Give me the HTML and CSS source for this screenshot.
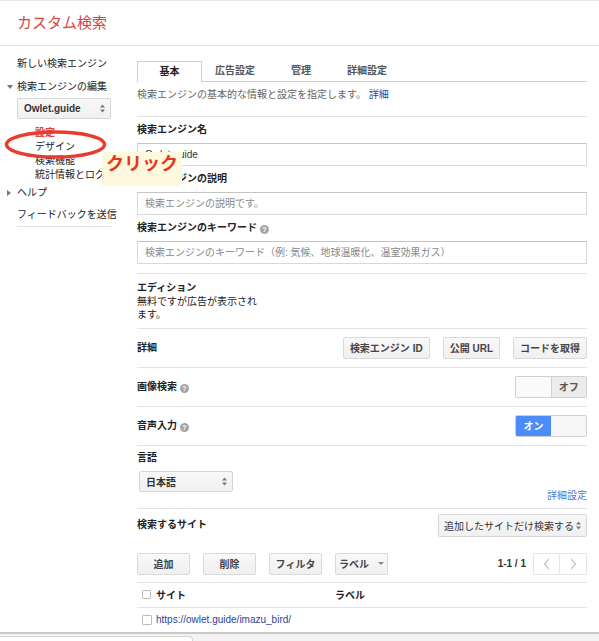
FILE: index.html
```html
<!DOCTYPE html>
<html lang="ja">
<head>
<meta charset="utf-8">
<title>カスタム検索</title>
<link rel="stylesheet" href="styles.css">
</head>
<body>
<div class="page">
  <header class="topbar"><h1 class="title">カスタム検索</h1></header>
  <div class="layout">
    <nav class="side">
      <div class="nav-item first">新しい検索エンジン</div>
      <div class="nav-item"><span class="tri down"></span>検索エンジンの編集</div>
      <div class="select side-select"><span class="sel-text">Owlet.guide</span><svg class="arrows" width="5" height="9" viewBox="0 0 5 9"><path d="M0 3.5L2.5 0.5L5 3.5Z M0 5.5L2.5 8.5L5 5.5Z" fill="#777"/></svg></div>
      <ul class="sub">
        <li class="active">設定</li>
        <li>デザイン</li>
        <li>検索機能</li>
        <li>統計情報とログ</li>
      </ul>
      <div class="nav-item help-item"><span class="tri right"></span>ヘルプ</div>
      <div class="nav-item feedback">フィードバックを送信</div>
    </nav>
    <main class="main">
      <div class="tabs">
        <div class="tab active">基本</div>
        <div class="tab">広告設定</div>
        <div class="tab">管理</div>
        <div class="tab">詳細設定</div>
      </div>
      <p class="intro">検索エンジンの基本的な情報と設定を指定します。 <a class="link">詳細</a></p>
      <section class="sec fields">
        <div class="label">検索エンジン名</div>
        <div class="input">Owlet.guide</div>
        <div class="label">検索エンジンの説明</div>
        <div class="input ph">検索エンジンの説明です。</div>
        <div class="label">検索エンジンのキーワード<span class="help">?</span></div>
        <div class="input ph">検索エンジンのキーワード（例: 気候、地球温暖化、温室効果ガス）</div>
      </section>
      <section class="sec edition">
        <div class="label">エディション</div>
        <div class="edition-text">無料ですが広告が表示されます。</div>
      </section>
      <section class="sec row">
        <div class="label">詳細</div>
        <div class="btns">
          <span class="btn">検索エンジン ID</span>
          <span class="btn">公開 URL</span>
          <span class="btn">コードを取得</span>
        </div>
      </section>
      <section class="sec row">
        <div class="label">画像検索<span class="help">?</span></div>
        <div class="toggle off"><span class="t-l"></span><span class="t-r">オフ</span></div>
      </section>
      <section class="sec row">
        <div class="label">音声入力<span class="help">?</span></div>
        <div class="toggle on"><span class="t-l">オン</span><span class="t-r"></span></div>
      </section>
      <section class="sec lang">
        <div class="label">言語</div>
        <div class="select lang-select"><span class="sel-text">日本語</span><svg class="arrows" width="5" height="9" viewBox="0 0 5 9"><path d="M0 3.5L2.5 0.5L5 3.5Z M0 5.5L2.5 8.5L5 5.5Z" fill="#777"/></svg></div>
        <div class="more"><a class="link2">詳細設定</a></div>
      </section>
      <section class="sec sites">
        <div class="sites-head">
          <div class="label">検索するサイト</div>
          <div class="select sites-select"><span class="sel-text">追加したサイトだけ検索する</span><svg class="arrows" width="5" height="9" viewBox="0 0 5 9"><path d="M0 3.5L2.5 0.5L5 3.5Z M0 5.5L2.5 8.5L5 5.5Z" fill="#777"/></svg></div>
        </div>
        <div class="toolbar">
          <span class="btn wide">追加</span>
          <span class="btn wide">削除</span>
          <span class="btn wide">フィルタ</span>
          <span class="btn wide label-btn">ラベル<span class="caret"></span></span>
          <div class="pager">
            <span class="count">1-1 / 1</span>
            <span class="pbtn"><svg width="8" height="12" viewBox="0 0 8 12"><path d="M6 1L1.5 6L6 11" fill="none" stroke="#c4c4c4" stroke-width="1.2"/></svg></span>
            <span class="pbtn"><svg width="8" height="12" viewBox="0 0 8 12"><path d="M2 1L6.5 6L2 11" fill="none" stroke="#c4c4c4" stroke-width="1.2"/></svg></span>
          </div>
        </div>
      </section>
      <div class="trow thead">
        <div class="c1"><span class="cb"></span>サイト</div>
        <div class="c2">ラベル</div>
      </div>
      <div class="trow tbody">
        <div class="c1"><span class="cb"></span><a class="site-link">https://owlet.guide/imazu_bird/</a></div>
      </div>
    </main>
  </div>
  <div class="shelf"><div class="shelf-tab"></div></div>

  <svg class="ellipse" width="120" height="170" viewBox="0 0 120 170"><ellipse cx="55.5" cy="144.5" rx="49" ry="12.5" fill="none" stroke="#ec3a2e" stroke-width="3.4"/></svg>
  <div class="callout">クリック</div>
</div>
</body>
</html>
```
FILE: styles.css
```css
* { box-sizing: border-box; }
html, body { margin: 0; padding: 0; }
body {
  width: 599px;
  height: 641px;
  overflow: hidden;
  background: #fff;
  font-family: "Liberation Sans", "Noto Sans CJK JP", sans-serif;
  font-size: 10px;
  color: #222;
}
.page { position: relative; }

.topbar {
  height: 46px;
  border-top: 1px solid #e8e8e8;
  border-bottom: 1px solid #e5e5e5;
  padding-left: 17px;
  display: flex;
  align-items: center;
}
.title {
  margin: 0;
  font-size: 15px;
  font-weight: normal;
  line-height: 20px;
  color: #d8453a;
}

.layout { display: flex; }

/* sidebar */
.side { width: 112px; padding-left: 17px; flex: none; }
.nav-item { line-height: 23px; white-space: nowrap; color: #222; }
.nav-item.first { padding-top: 5.5px; }
.tri { display: inline-block; width: 0; height: 0; vertical-align: middle; }
.tri.down {
  margin-left: -10px; margin-right: 4px;
  border-left: 3px solid transparent;
  border-right: 3px solid transparent;
  border-top: 4px solid #777;
}
.tri.right {
  margin-left: -10px; margin-right: 6px;
  border-top: 3px solid transparent;
  border-bottom: 3px solid transparent;
  border-left: 4px solid #777;
}
.select {
  display: flex;
  align-items: center;
  justify-content: space-between;
  height: 21px;
  padding: 0 5px 0 6px;
  border: 1px solid #d6d6d6;
  border-radius: 2px;
  background: linear-gradient(#f8f8f8, #f0f0f0);
  color: #333;
  font-weight: bold;
  white-space: nowrap;
}
.side-select { width: 94px; }
.sub { list-style: none; margin: 7px 0 0; padding: 0 0 0 18px; }
.sub li { line-height: 14px; white-space: nowrap; color: #222; }
.sub li.active { color: #d8453a; font-weight: bold; }
.help-item { line-height: 22px; }
.feedback { line-height: 22px; border-bottom: 1px solid #e5e5e5; }

/* main */
.main { width: 450px; margin-left: 25px; padding-top: 15px; flex: none; }
.tabs { display: flex; height: 21px; border-bottom: 1px solid #cfcfcf; }
.tab {
  width: 66px;
  height: 20px;
  line-height: 20px;
  text-align: center;
  font-weight: bold;
  color: #555;
}
.tab.active {
  width: 65px;
  height: 21px;
  border: 1px solid #cfcfcf;
  border-bottom: none;
  background: #fff;
  color: #222;
  line-height: 19px;
}
.intro {
  margin: 0;
  height: 35px;
  padding-top: 6px;
  line-height: 14px;
  color: #666;
  border-bottom: 1px solid #e5e5e5;
}
.link { color: #2e3f9c; }
.link2 { color: #4a7bcf; }

.sec { border-bottom: 1px solid #e5e5e5; }
.label { font-weight: bold; line-height: 14px; color: #222; white-space: nowrap; }
.help {
  display: inline-block;
  width: 9px;
  height: 9px;
  margin-left: 3px;
  border-radius: 50%;
  background: #a5a5a5;
  color: #fff;
  font-size: 7px;
  line-height: 9px;
  text-align: center;
  vertical-align: -1px;
  font-weight: bold;
}

.fields { padding: 6px 0 9px; }
.fields .label + .input { margin-top: 6px; }
.fields .input + .label { margin-top: 6px; }
.input {
  height: 23px;
  padding: 0 7px;
  border: 1px solid #d9d9d9;
  border-top-color: #c4c4c4;
  line-height: 21px;
  color: #333;
  white-space: nowrap;
}
.input.ph { color: #888; }

.edition { padding: 7px 0 6px; }
.edition .label, .edition-text { line-height: 13.5px; }
.edition-text { width: 124px; color: #222; }

.row {
  height: 39px;
  display: flex;
  align-items: center;
  justify-content: space-between;
}
.btns { display: flex; gap: 13px; }
.btn {
  display: inline-flex;
  align-items: center;
  justify-content: center;
  height: 22px;
  padding: 0 6px;
  border: 1px solid #dadada;
  border-radius: 2px;
  background: linear-gradient(#f8f8f8, #f0f0f0);
  color: #444;
  font-weight: bold;
  white-space: nowrap;
}
.toggle {
  display: flex;
  width: 72px;
  height: 22px;
  border: 1px solid #d0d0d0;
  border-radius: 2px;
  overflow: hidden;
}
.toggle span {
  flex: 1;
  display: flex;
  align-items: center;
  justify-content: center;
  font-weight: bold;
}
.toggle.off .t-l { background: #fafafa; }
.toggle.off .t-r { background: #ececec; color: #555; border-left: 1px solid #d0d0d0; }
.toggle.on { border-color: #d0d0d0; }
.toggle.on .t-l { background: #4a8df8; color: #fff; }
.toggle.on .t-r { background: #f6f6f6; }

.lang { padding: 5px 0 5px; }
.lang-select { width: 94px; margin-top: 6px; margin-left: 2px; padding-right: 5px; }
.more { margin-top: -3px; line-height: 14px; text-align: right; }

.sites { padding: 5px 0 7px; }
.sites-head { display: flex; align-items: center; justify-content: space-between; }
.sites-select { width: 149px; height: 23px; padding: 0 5px; font-weight: normal; color: #333; }
.toolbar { display: flex; align-items: center; gap: 13px; margin-top: 16px; }
.btn.wide { width: 53px; padding: 0; }
.label-btn { gap: 9px; padding-left: 3px; }
.caret {
  display: inline-block;
  width: 0; height: 0;
  border-left: 3px solid transparent;
  border-right: 3px solid transparent;
  border-top: 3px solid #888;
}
.pager { margin-left: auto; display: flex; align-items: center; }
.count { font-weight: bold; color: #333; margin-right: 7px; }
.pbtn {
  display: flex;
  align-items: center;
  justify-content: center;
  width: 27px;
  height: 22px;
  border: 1px solid #e6e6e6;
  background: #fff;
}
.pbtn + .pbtn { border-left: none; }

.trow { display: flex; align-items: center; border-bottom: 1px solid #e5e5e5; }
.thead { height: 25px; font-weight: bold; }
.tbody { height: 24px; border-bottom: none; }
.c1 { width: 198px; display: flex; align-items: center; padding-left: 5px; white-space: nowrap; }
.cb {
  display: inline-block;
  width: 9px;
  height: 9px;
  margin-right: 5px;
  border: 1px solid #bdbdbd;
  border-radius: 1px;
  background: #fff;
}
.tbody .cb { width: 10px; height: 10px; margin-right: 4px; }
.site-link { color: #2e3f9c; }

.shelf {
  border-top: 2px solid #c9c9c9;
  background: #f3f3f3;
  height: 30px;
  padding-top: 2px;
}
.shelf-tab {
  width: 193px;
  height: 24px;
  background: #fff;
  border: 1px solid #d3d3d3;
  border-left: none;
  border-top-right-radius: 4px;
}

/* annotations */
.ellipse { position: absolute; left: 0; top: 0; }
.callout {
  position: absolute;
  left: 102px;
  top: 152px;
  width: 80px;
  height: 34px;
  padding: 1px 0 0 4px;
  background: #fef9dc;
  color: #e8361e;
  font-size: 18px;
  font-weight: bold;
  line-height: 22px;
  white-space: nowrap;
}
```
